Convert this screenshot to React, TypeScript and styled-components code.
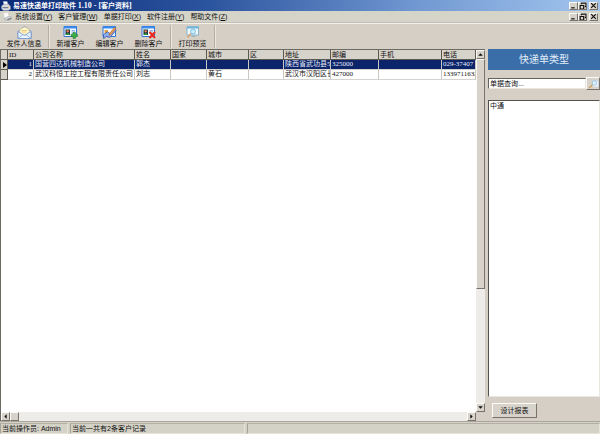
import React from "react";
import styled, { createGlobalStyle, css } from "styled-components";

const GlobalStyle = createGlobalStyle`
  *, *::before, *::after { box-sizing: border-box; }
  html, body { margin: 0; padding: 0; }
  body {
    font-family: "Liberation Sans", "Noto Sans CJK SC", sans-serif;
    font-size: 7px;
    line-height: 9px;
    color: #111;
    background: #d6cfc6;
    overflow: hidden;
  }
  button, input { font: inherit; color: inherit; margin: 0; border-radius: 0; }
  svg { display: block; flex: none; }
`;

const raised = css`
  border: 1px solid;
  border-color: #fbfaf6 #77736c #77736c #fbfaf6;
  background: #d8d3ca;
`;

const Page = styled.div`
  display: flex;
  flex-direction: column;
  height: 100vh;
`;

const TitleBar = styled.header`
  display: flex;
  align-items: center;
  height: 11px;
  padding: 0 2px 0 1px;
  gap: 2px;
  color: #fff;
  font-weight: bold;
  background: linear-gradient(90deg, #0a2a78 0%, #2c559f 35%, #7299d2 70%, #a3c6ee 100%);
`;

const TitleText = styled.h1`
  flex: 1;
  margin: 0;
  font-family: "Liberation Serif", "Noto Sans CJK SC", serif;
  font-size: 7px;
  line-height: 11px;
  white-space: pre;
`;

const TitleNumber = styled.span`
  font-size: 8px;
`;

const MenuBar = styled.nav`
  display: flex;
  align-items: center;
  height: 12px;
  padding: 0 2px 0 3px;
  background: #d5d4c9;
  border-bottom: 1px solid #c2beb4;
`;

const MenuItems = styled.div`
  display: flex;
  flex: 1;
  gap: 6px;
  margin-left: 3px;
`;

const MenuButton = styled.button`
  border: 0;
  padding: 0;
  background: none;
  white-space: nowrap;
`;

const WindowButtons = styled.div`
  display: flex;
`;

const WindowButton = styled.button<{ $gap?: boolean }>`
  ${raised}
  display: flex;
  align-items: center;
  justify-content: center;
  width: 9px;
  height: 8px;
  padding: 0;
  margin-left: ${(p) => (p.$gap ? 2 : 0)}px;
`;

const ToolBar = styled.div`
  display: flex;
  height: 26px;
  padding: 1px 2px;
  border-top: 1px solid #f4f1ec;
  background: #d6cfc6;
`;

const ToolButton = styled.button<{ $wide?: boolean }>`
  display: flex;
  flex-direction: column;
  align-items: center;
  width: ${(p) => (p.$wide ? 44 : 39)}px;
  padding: 1px 0 0;
  border: 0;
  background: none;
  white-space: nowrap;
`;

const Separator = styled.span`
  width: 2px;
  margin: 0 1px 0 2px;
  border-left: 1px solid #b5aea5;
  border-right: 1px solid #ebe7e0;
`;

const Workspace = styled.main`
  display: flex;
  flex: 1;
  min-height: 0;
`;

const GridPane = styled.section`
  display: grid;
  grid-template-columns: minmax(0, 1fr) 9px;
  grid-template-rows: minmax(0, 1fr) 9px;
  flex: 1;
  min-width: 0;
  border-top: 1px solid #6d6a64;
  border-left: 1px solid #6d6a64;
  background: #fff;
`;

const TableView = styled.div`
  overflow: hidden;
`;

const Table = styled.table`
  width: 100%;
  table-layout: fixed;
  border-collapse: separate;
  border-spacing: 0;
  white-space: nowrap;
`;

const Col = styled.col<{ $w?: number }>`
  width: ${(p) => (p.$w ? `${p.$w}px` : "auto")};
`;

const Th = styled.th<{ $latin?: boolean }>`
  height: 10px;
  padding: 0 0 0 1px;
  overflow: hidden;
  font-family: ${(p) => (p.$latin ? `"Liberation Serif", serif` : "inherit")};
  font-weight: normal;
  line-height: 8px;
  text-align: left;
  background: #d6d3ca;
  border-right: 1px solid #5c5953;
  border-bottom: 1px solid #5c5953;
`;

const Row = styled.tr<{ $selected?: boolean }>`
  color: ${(p) => (p.$selected ? "#e8ecf8" : "#111")};
  background: ${(p) => (p.$selected ? "#0b246a" : "#fff")};
`;

const Td = styled.td<{ $right?: boolean }>`
  height: 10px;
  padding: 0 1px;
  overflow: hidden;
  font-family: "Liberation Serif", "Noto Sans CJK SC", serif;
  line-height: 9px;
  text-align: ${(p) => (p.$right ? "right" : "left")};
  border-right: 1px solid #c9c8c4;
  border-bottom: 1px solid #d4d3cf;
`;

const Marker = styled.td`
  height: 10px;
  padding: 0 0 0 2px;
  background: #d6d3ca;
  border-right: 1px solid #5c5953;
  border-bottom: 1px solid #5c5953;
`;

const ScrollTrack = styled.div<{ $vertical?: boolean }>`
  display: flex;
  flex-direction: ${(p) => (p.$vertical ? "column" : "row")};
  background: #eeece8;
`;

const ScrollButton = styled.button`
  ${raised}
  display: flex;
  align-items: center;
  justify-content: center;
  width: 9px;
  height: 9px;
  padding: 0;
`;

const ScrollThumb = styled.div<{ $size: string }>`
  ${raised}
  flex: 0 0 ${(p) => p.$size};
`;

const ScrollRoom = styled.div`
  display: flex;
  flex: 1;
  flex-direction: inherit;
`;

const Corner = styled.div`
  background: #d6cfc6;
`;

const SidePanel = styled.aside`
  display: flex;
  flex-direction: column;
  width: 115px;
  padding-left: 3px;
  background: #d6cfc6;
`;

const PanelTitle = styled.h2`
  margin: 0;
  font-size: 10px;
  font-weight: normal;
  line-height: 21px;
  text-align: center;
  color: #e4eefa;
  background: #3a6ea9;
`;

const SearchRow = styled.div`
  display: flex;
  align-items: center;
  margin-top: 7px;
`;

const SearchInput = styled.input`
  flex: 1;
  min-width: 0;
  height: 11px;
  padding: 0 1px;
  border: 1px solid;
  border-color: #65625c #e9e6e0 #e9e6e0 #65625c;
  background: #fff;
  outline: 0;
  &::placeholder { color: #111; opacity: 1; }
`;

const SearchButton = styled.button`
  ${raised}
  display: flex;
  align-items: center;
  justify-content: center;
  width: 14px;
  height: 13px;
  padding: 0;
`;

const TypeList = styled.ul`
  flex: 1;
  margin: 10px 0 0;
  padding: 0 1px;
  list-style: none;
  border: 1px solid;
  border-color: #55524d #e9e6e0 #e9e6e0 #55524d;
  background: #fff;
`;

const DesignButton = styled.button`
  ${raised}
  align-self: flex-start;
  width: 45px;
  height: 15px;
  margin: 6px 0 3px 4px;
  padding: 0;
  line-height: 11px;
`;

const StatusBar = styled.footer`
  display: flex;
  gap: 2px;
  height: 13px;
  padding-top: 1px;
  border-top: 1px solid #aaa69e;
  background: #d4d1c6;
`;

const StatusCell = styled.span<{ $w?: number }>`
  flex: ${(p) => (p.$w ? `0 0 ${p.$w}px` : "1")};
  padding-left: 1px;
  border: 1px solid;
  border-color: #b3afa5 #e6e3db #e6e3db #a6a298;
  line-height: 10px;
  white-space: pre;
`;

const PrinterIcon = () => (
  <svg width="10" height="10" viewBox="0 0 18 18" aria-hidden="true">
    <path d="M4 1h7l2 7H6z" fill="#fff" stroke="#a9b7d8" />
    <path d="M1 9l4-3h9l3 4v5l-4 2H4l-3-3z" fill="#d8dbe4" stroke="#8d95a8" />
    <path d="M3 12h10" stroke="#6b7388" strokeWidth="2" />
    <circle cx="14" cy="11" r="1" fill="#e4bd35" />
  </svg>
);

const DocumentIcon = () => (
  <svg width="9" height="9" viewBox="0 0 18 18" aria-hidden="true">
    <path d="M1 3l8-2 4 9-9 3z" fill="#fff" stroke="#dededb" />
    <path d="M3 13l9-5 5 3v3l-8 3-6-2z" fill="#d3d5d8" stroke="#92969b" />
    <path d="M9 15l7-2" stroke="#5d6670" strokeWidth="2" />
  </svg>
);

const EnvelopeIcon = () => (
  <svg width="15" height="13" viewBox="0 0 30 26" aria-hidden="true">
    <path d="M2 11L15 1l13 10v14H2z" fill="#cfe3fb" stroke="#6488bf" strokeWidth="1.5" />
    <path d="M6 7l9-5 9 5v10H6z" fill="#fff8cf" stroke="#d5bd79" />
    <path d="M9 9h11M9 12h10" stroke="#edbd62" strokeWidth="1.5" />
    <path d="M2 11l13 8 13-8v14H2z" fill="#e8f4ff" stroke="#6f94cb" strokeWidth="1.5" />
    <path d="M2 25l10-8M28 25l-10-8" stroke="#83a4d2" strokeWidth="1.5" />
  </svg>
);

const CardIcon = ({ kind }: { kind: "add" | "edit" | "delete" }) => (
  <svg width="15" height="13" viewBox="0 0 30 26" aria-hidden="true">
    <path d="M2 1h25v20H2z" fill="#f4f9ff" stroke="#2f76d5" strokeWidth="2" />
    <path d="M2 1h25v4H2z" fill="#3b8df0" />
    {kind === "edit" ? (
      <>
        <path d="M5 8h7v6H5z" fill="#e2a23d" />
        <path d="M3 17l8-5 5 3 10-11 2 5-12 14-7-2-6 4z" fill="#8fb0f0" stroke="#304fa8" strokeWidth="1.5" />
        <path d="M15 15L25 3l3 2-10 12-4 2z" fill="#f1a14b" stroke="#a95027" />
      </>
    ) : (
      <>
        <path d="M5 7h9v11H5z" fill="#173a3f" />
        <circle cx="9.5" cy="10.5" r="2.5" fill="#e0734d" />
        <path d="M6 18c0-5 7-5 7 0z" fill="#3b9b43" />
        <path d="M17 9h7M17 12h7M17 15h4" stroke="#7299d2" strokeWidth="1.5" />
      </>
    )}
    {kind === "add" && (
      <path d="M20 13h5v4h4v4h-4v4h-5v-4h-4v-4h4z" fill="#3db342" stroke="#16772a" />
    )}
    {kind === "delete" && (
      <path d="M17 12l11 12M28 12L17 24" stroke="#ef2618" strokeWidth="4" />
    )}
  </svg>
);

const PreviewIcon = () => (
  <svg width="15" height="13" viewBox="0 0 30 26" aria-hidden="true">
    <path d="M4 2h23v16H4z" fill="#eefaff" stroke="#68a5c4" strokeWidth="1.5" />
    <path d="M4 1h23v4H4z" fill="#6bb4dc" />
    <circle cx="16" cy="11" r="5" fill="#c5edff" stroke="#6faed0" strokeWidth="1.5" />
    <path d="M12 15l-7 8" stroke="#d9a46c" strokeWidth="3" />
    <path d="M13 21h8" stroke="#9cb5be" strokeWidth="2" />
  </svg>
);

const MagnifierIcon = () => (
  <svg width="11" height="10" viewBox="0 0 22 20" aria-hidden="true">
    <path d="M9 3h12v13H9z" fill="#edf4fb" stroke="#b8c9da" />
    <circle cx="13" cy="8" r="4.5" fill="#d5efff" stroke="#9dbdd4" strokeWidth="1.5" />
    <path d="M9 12l-7 6" stroke="#d4a15c" strokeWidth="3" />
  </svg>
);

const glyphs = {
  minimize: <path d="M1 5h3" stroke="#111" />,
  restore: <path d="M2 2V1h4v3H5M1 3h3v3H1z" fill="none" stroke="#111" />,
  close: <path d="M1 1l4 4M5 1L1 5" stroke="#111" />,
  up: <path d="M1 4l2-2 2 2z" fill="#111" />,
  down: <path d="M1 2l2 2 2-2z" fill="#111" />,
  left: <path d="M4 1L2 3l2 2z" fill="#111" />,
  right: <path d="M2 1l2 2-2 2z" fill="#111" />,
};

const Glyph = ({ name }: { name: keyof typeof glyphs }) => (
  <svg width="7" height="7" viewBox="0 0 6 6" aria-hidden="true">
    {glyphs[name]}
  </svg>
);

const WindowControls = ({ target }: { target: string }) => (
  <WindowButtons>
    <WindowButton aria-label={`最小化${target}`}><Glyph name="minimize" /></WindowButton>
    <WindowButton aria-label={`还原${target}`}><Glyph name="restore" /></WindowButton>
    <WindowButton aria-label={`关闭${target}`} $gap><Glyph name="close" /></WindowButton>
  </WindowButtons>
);

const menus = [
  ["系统设置", "Y"],
  ["客户管理", "W"],
  ["单据打印", "X"],
  ["软件注册", "Y"],
  ["帮助文件", "Z"],
];

const columns: { title: string; width?: number; latin?: boolean; right?: boolean }[] = [
  { title: "ID", width: 26, latin: true, right: true },
  { title: "公司名称", width: 101 },
  { title: "姓名", width: 36 },
  { title: "国家", width: 36 },
  { title: "城市", width: 42 },
  { title: "区", width: 35 },
  { title: "地址", width: 47 },
  { title: "邮编", width: 48 },
  { title: "手机", width: 63 },
  { title: "电话" },
];

const customers = [
  ["1", "国营四达机械制造公司", "郭杰", "", "", "", "陕西省武功县5", "325000", "", "029-37407"],
  ["2", "武汉科恒工控工程有限责任公司", "刘志", "", "黄石", "", "武汉市汉阳区长", "427000", "", "1339711632"],
];

export default function App() {
  return (
    <Page>
      <GlobalStyle />
      <TitleBar>
        <PrinterIcon />
        <TitleText>
          易速快递单打印软件 <TitleNumber>1.10 - [</TitleNumber>客户资料<TitleNumber>]</TitleNumber>
        </TitleText>
        <WindowControls target="程序" />
      </TitleBar>
      <MenuBar>
        <DocumentIcon />
        <MenuItems>
          {menus.map(([label, key]) => (
            <MenuButton key={label}>
              {label}(<u>{key}</u>)
            </MenuButton>
          ))}
        </MenuItems>
        <WindowControls target="窗口" />
      </MenuBar>
      <ToolBar>
        <ToolButton $wide><EnvelopeIcon />发件人信息</ToolButton>
        <Separator />
        <ToolButton><CardIcon kind="add" />新增客户</ToolButton>
        <ToolButton><CardIcon kind="edit" />编辑客户</ToolButton>
        <ToolButton><CardIcon kind="delete" />删除客户</ToolButton>
        <Separator />
        <ToolButton><PreviewIcon />打印预览</ToolButton>
        <Separator />
      </ToolBar>
      <Workspace>
        <GridPane>
          <TableView>
            <Table>
              <colgroup>
                <Col $w={7} />
                {columns.map((c) => <Col key={c.title} $w={c.width} />)}
              </colgroup>
              <thead>
                <tr>
                  <Th />
                  {columns.map((c) => <Th key={c.title} $latin={c.latin}>{c.title}</Th>)}
                </tr>
              </thead>
              <tbody>
                {customers.map((cells, r) => (
                  <Row key={cells[0]} $selected={r === 0}>
                    <Marker>
                      {r === 0 && (
                        <svg width="4" height="6" viewBox="0 0 4 6" aria-hidden="true">
                          <path d="M0 0l4 3-4 3z" fill="#000" />
                        </svg>
                      )}
                    </Marker>
                    {cells.map((text, c) => (
                      <Td key={columns[c].title} $right={columns[c].right}>
                        {text}
                      </Td>
                    ))}
                  </Row>
                ))}
              </tbody>
            </Table>
          </TableView>
          <ScrollTrack $vertical>
            <ScrollButton aria-label="向上滚动"><Glyph name="up" /></ScrollButton>
            <ScrollRoom><ScrollThumb $size="67%" /></ScrollRoom>
            <ScrollButton aria-label="向下滚动"><Glyph name="down" /></ScrollButton>
          </ScrollTrack>
          <ScrollTrack>
            <ScrollButton aria-label="向左滚动"><Glyph name="left" /></ScrollButton>
            <ScrollRoom><ScrollThumb $size="9px" /></ScrollRoom>
            <ScrollButton aria-label="向右滚动"><Glyph name="right" /></ScrollButton>
          </ScrollTrack>
          <Corner />
        </GridPane>
        <SidePanel>
          <PanelTitle>快递单类型</PanelTitle>
          <SearchRow>
            <SearchInput aria-label="单据查询" placeholder="单据查询..." />
            <SearchButton aria-label="查询"><MagnifierIcon /></SearchButton>
          </SearchRow>
          <TypeList>
            <li>中通</li>
          </TypeList>
          <DesignButton>设计报表</DesignButton>
        </SidePanel>
      </Workspace>
      <StatusBar>
        <StatusCell $w={68}>当前操作员: Admin</StatusCell>
        <StatusCell $w={175}>当前一共有2条客户记录</StatusCell>
        <StatusCell />
      </StatusBar>
    </Page>
  );
}
